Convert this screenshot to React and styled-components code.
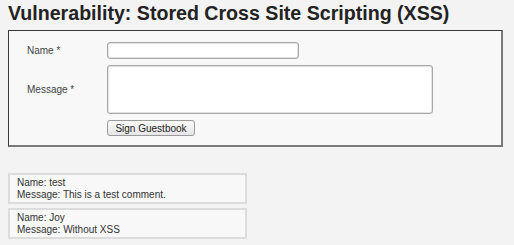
import React from "react";
import styled, { createGlobalStyle } from "styled-components";

const GlobalStyle = createGlobalStyle`
    *, *::before, *::after {
        box-sizing: border-box;
    }
    html, body {
        margin: 0;
        padding: 0;
        background: #f3f3f3;
    }
    body {
        font-family: "Liberation Sans", Arial, sans-serif;
        color: #333;
    }
`

const Page = styled.div`
    padding: 1px 8px 0 8px;
`

const Title = styled.h1`
    margin: 0 0 5px 0;
    font-size: 19.6px;
    line-height: 24px;
    font-weight: bold;
    color: #222;
`

const CodeArea = styled.div`
    width: 495px;
    background: #f7f8f7;
    border-top: 1px solid #3a3a3a;
    border-left: 1px solid #3a3a3a;
    border-right: 2px solid #7a7a7a;
    border-bottom: 2px solid #7a7a7a;
    padding: 11px 0 9px 18px;
`

const Form = styled.div`
    display: grid;
    grid-template-columns: 80px auto;
    align-items: center;
    row-gap: 6px;
    justify-items: start;
`

const Label = styled.label`
    font-size: 10px;
    color: #444;
`

const TextInput = styled.input`
    width: 192px;
    height: 17px;
    border: 1px solid #a8a8a8;
    border-radius: 3px;
    background: #fff;
    padding: 0 3px;
    box-shadow: inset 0 0 0 0.5px #c8c8c8;
    outline: none;
`

const TextArea = styled.textarea`
    width: 326px;
    height: 49px;
    border: 1px solid #a8a8a8;
    border-radius: 3px;
    background: #fff;
    box-shadow: inset 0 0 0 0.5px #c8c8c8;
    outline: none;
    resize: none;
    display: block;
`

const Button = styled.button`
    grid-column: 2;
    height: 16px;
    width: 88px;
    padding: 0;
    font-family: "Liberation Sans", Arial, sans-serif;
    font-size: 10px;
    color: #222;
    border: 1px solid #9a9a9a;
    border-radius: 3px;
    background: linear-gradient(#fbfbfb, #e6e6e6);
`

const Comments = styled.div`
    margin-top: 26px;
    display: flex;
    flex-direction: column;
    gap: 4px;
`

const Comment = styled.div`
    width: 239px;
    height: 31px;
    border: 2px solid #dcdcdc;
    background: #f7f8f7;
    padding: 2px 7px;
    font-size: 10px;
    line-height: 11.5px;
    color: #333;
`

const comments = [
    { id: 1, name: "test", message: "This is a test comment." },
    { id: 2, name: "Joy", message: "Without XSS" },
]

export default function App() {
    return (
        <Page>
            <GlobalStyle />
            <Title>Vulnerability: Stored Cross Site Scripting (XSS)</Title>
            <CodeArea>
                <Form>
                    <Label>Name *</Label>
                    <TextInput type="text" />
                    <Label>Message *</Label>
                    <TextArea />
                    <Button>Sign Guestbook</Button>
                </Form>
            </CodeArea>
            <Comments>
                {comments.map(c => (
                    <Comment key={c.id}>
                        <div>Name: {c.name}</div>
                        <div>Message: {c.message}</div>
                    </Comment>
                ))}
            </Comments>
        </Page>
    )
}
